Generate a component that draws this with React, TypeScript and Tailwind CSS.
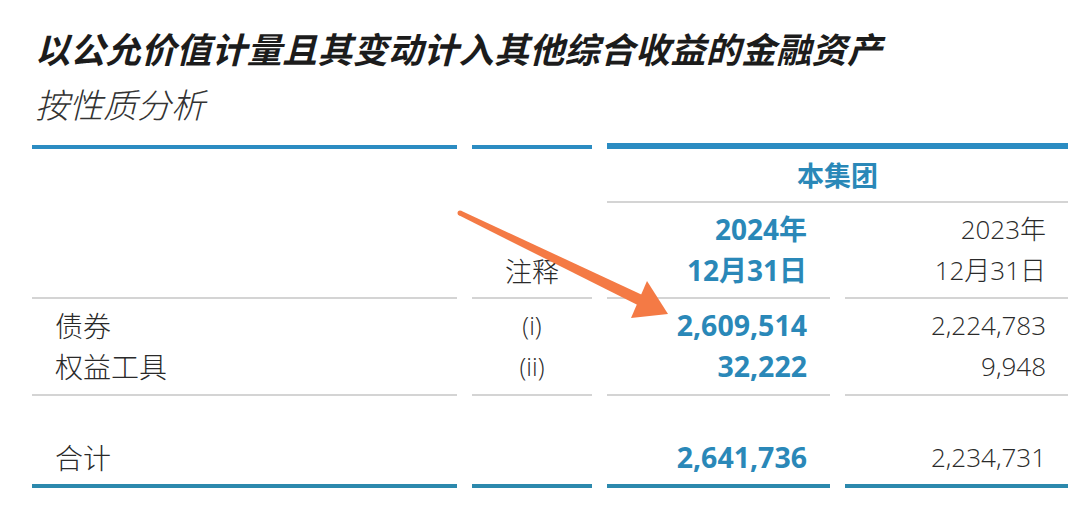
import React from 'react';

const cjk = "font-['Noto_Sans_CJK_SC',sans-serif]";
const num = "font-['Open_Sans','Noto_Sans_CJK_SC',sans-serif]";

const rows = [
  { label: '债券', note: '(i)', cur: '2,609,514', prev: '2,224,783' },
  { label: '权益工具', note: '(ii)', cur: '32,222', prev: '9,948' },
];

const Arrow = () => (
  <svg className="pointer-events-none absolute left-0 top-0" width="1080" height="505" viewBox="0 0 1080 505">
    <polygon points="458.9,215.3 461.1,210.7 642.4,295 637.6,305" fill="#f47a45" />
    <circle cx="460" cy="213" r="2.5" fill="#f47a45" />
    <polygon points="647,281 668,314 631,318" fill="#f47a45" />
  </svg>
);

export default function App() {
  return (
    <div className="relative h-[505px] w-[1080px] overflow-hidden bg-white text-[#2a2a2a]">
      {/* Heading */}
      <div className={`pl-[35px] pt-[28px] ${cjk}`}>
        <h1 className="text-[35px] font-bold italic leading-[40px] tracking-[0.3px] text-[#1c1c1c]">
          以公允价值计量且其变动计入其他综合收益的金融资产
        </h1>
        <h2 className="mt-[16px] text-[34px] font-light italic leading-[40px] text-[#333]">按性质分析</h2>
      </div>

      {/* Table */}
      <div className="mt-[19px] grid grid-cols-[425px_120px_223px_223px] gap-x-[15px] pl-[32px]">
        {/* header */}
        <div className="row-span-2 mt-[2px] border-t-4 border-b-2 border-t-[#2b8cc2] border-b-[#d4d4d4]" />
        <div
          className={`row-span-2 mt-[2px] flex items-end justify-center border-t-4 border-b-2 border-t-[#2b8cc2] border-b-[#d4d4d4] pb-[6px] text-[27px] font-light leading-[41px] ${cjk}`}
        >
          注释
        </div>
        <div
          className={`col-span-2 flex h-[60px] items-center justify-center border-t-[6px] border-b-2 border-t-[#2b8cc2] border-b-[#d4d4d4] text-[27px] font-bold text-[#2a88b8] ${cjk}`}
        >
          本集团
        </div>
        <div className={`flex h-[96px] flex-col items-end justify-center border-b-2 border-[#d4d4d4] pr-[23px] text-[28px] font-bold leading-[41px] text-[#2a88b8] ${num}`}>
          <span>2024年</span>
          <span>12月31日</span>
        </div>
        <div className={`flex h-[96px] flex-col items-end justify-center border-b-2 border-[#d4d4d4] pr-[22px] text-[26px] font-light leading-[41px] ${num}`}>
          <span>2023年</span>
          <span>12月31日</span>
        </div>

        {/* body */}
        <div className={`border-b-2 border-[#d4d4d4] pt-[6px] pb-[7px] pl-[23px] text-[28px] font-light leading-[41px] ${cjk}`}>
          {rows.map((r) => (
            <div key={r.label}>{r.label}</div>
          ))}
        </div>
        <div className={`border-b-2 border-[#d4d4d4] pt-[6px] pb-[7px] text-center text-[25px] font-light leading-[41px] ${num}`}>
          {rows.map((r) => (
            <div key={r.note}>{r.note}</div>
          ))}
        </div>
        <div className={`border-b-2 border-[#d4d4d4] pt-[6px] pb-[7px] pr-[23px] text-right text-[28.5px] font-bold leading-[41px] text-[#2a88b8] ${num}`}>
          {rows.map((r) => (
            <div key={r.cur}>{r.cur}</div>
          ))}
        </div>
        <div className={`border-b-2 border-[#d4d4d4] pt-[6px] pb-[7px] pr-[22px] text-right text-[26px] font-light leading-[41px] ${num}`}>
          {rows.map((r) => (
            <div key={r.prev}>{r.prev}</div>
          ))}
        </div>

        {/* total */}
        <div className={`border-b-4 border-[#2c89ad] pt-[41px] pb-[6px] pl-[23px] text-[28px] font-light leading-[41px] ${cjk}`}>合计</div>
        <div className="border-b-4 border-[#2c89ad]" />
        <div className={`border-b-4 border-[#2c89ad] pt-[41px] pb-[6px] pr-[23px] text-right text-[28.5px] font-bold leading-[41px] text-[#2a88b8] ${num}`}>
          2,641,736
        </div>
        <div className={`border-b-4 border-[#2c89ad] pt-[41px] pb-[6px] pr-[22px] text-right text-[26px] font-light leading-[41px] ${num}`}>
          2,234,731
        </div>
      </div>

      <Arrow />
    </div>
  );
}
